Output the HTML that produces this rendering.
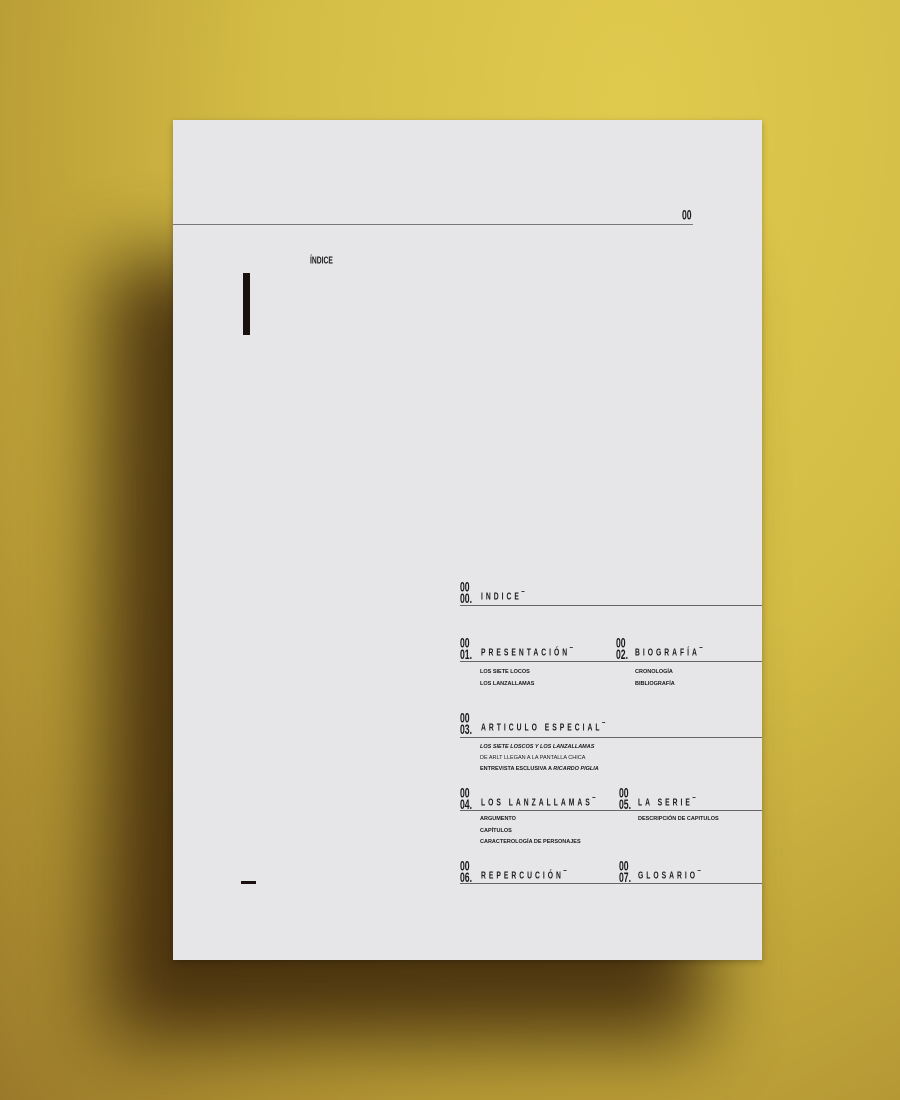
<!DOCTYPE html>
<html><head><meta charset="utf-8"><style>
html,body{margin:0;padding:0}
body{width:900px;height:1100px;position:relative;overflow:hidden;
background:radial-gradient(ellipse at 70% 10%,#e0ca4e 0%,#d4bd45 40%,#b79a35 75%,#9a7a2a 100%);
font-family:"Liberation Sans Narrow","Liberation Sans",sans-serif}
.shadow{position:absolute;left:105px;top:260px;width:600px;height:780px;background:#2e1804;filter:blur(40px);opacity:.8}
.paper{position:absolute;left:173px;top:120px;width:589px;height:840px;background:#e6e6e8;box-shadow:0 2px 6px rgba(0,0,0,.25)}
.a{position:absolute;color:#1a1a1a}
.ln{position:absolute;height:1px;background:#666}
.n{position:absolute;font-weight:bold;font-size:12px;line-height:10px;transform:scale(.72,1.15);transform-origin:left top}
.t{position:absolute;font-weight:bold;font-size:9px;letter-spacing:4px;transform:scale(.75,1.1);transform-origin:left}
.s{position:absolute;font-weight:bold;font-size:5.5px;font-family:"Liberation Sans",sans-serif}
</style></head><body>
<div class="shadow"></div>
<div class="paper">
<div class="ln" style="left:0;top:104px;width:520px;background:#777"></div>
<div class="n a" style="left:509px;top:89px">00</div>
<div class="a" style="left:137px;top:135px;font-size:9px;font-weight:bold;transform:scale(.75,1.1);transform-origin:left">ÍNDICE</div>
<div class="a" style="left:70px;top:153px;width:7px;height:62px;background:#1a1010"></div>
<div class="a" style="left:68px;top:761px;width:15px;height:3px;background:#1a1010"></div>

<div class="n a" style="left:287px;top:461px">00<br>00.</div>
<div class="t a" style="left:308px;top:471px">INDICE‾</div>
<div class="ln" style="left:287px;top:485px;width:302px"></div>

<div class="n a" style="left:287px;top:517px">00<br>01.</div>
<div class="t a" style="left:308px;top:527px">PRESENTACIÓN‾</div>
<div class="n a" style="left:443px;top:517px">00<br>02.</div>
<div class="t a" style="left:462px;top:527px">BIOGRAFÍA‾</div>
<div class="ln" style="left:287px;top:541px;width:302px"></div>
<div class="s a" style="left:307px;top:549px">LOS SIETE LOCOS</div>
<div class="s a" style="left:307px;top:561px">LOS LANZALLAMAS</div>
<div class="s a" style="left:462px;top:549px">CRONOLOGÍA</div>
<div class="s a" style="left:462px;top:561px">BIBLIOGRAFÍA</div>

<div class="n a" style="left:287px;top:592px">00<br>03.</div>
<div class="t a" style="left:308px;top:602px">ARTICULO ESPECIAL‾</div>
<div class="ln" style="left:287px;top:617px;width:302px"></div>
<div class="s a" style="left:307px;top:624px;font-style:italic">LOS SIETE LOSCOS Y LOS LANZALLAMAS</div>
<div class="s a" style="left:307px;top:635px;font-weight:normal">DE ARLT LLEGAN A LA PANTALLA CHICA</div>
<div class="s a" style="left:307px;top:646px">ENTREVISTA ESCLUSIVA A <i>RICARDO PIGLIA</i></div>

<div class="n a" style="left:287px;top:667px">00<br>04.</div>
<div class="t a" style="left:308px;top:677px">LOS LANZALLAMAS‾</div>
<div class="n a" style="left:446px;top:667px">00<br>05.</div>
<div class="t a" style="left:465px;top:677px">LA SERIE‾</div>
<div class="ln" style="left:287px;top:690px;width:302px"></div>
<div class="s a" style="left:307px;top:696px">ARGUMENTO</div>
<div class="s a" style="left:307px;top:708px">CAPÍTULOS</div>
<div class="s a" style="left:307px;top:719px">CARACTEROLOGÍA DE PERSONAJES</div>
<div class="s a" style="left:465px;top:696px">DESCRIPCIÓN DE CAPITULOS</div>

<div class="n a" style="left:287px;top:740px">00<br>06.</div>
<div class="t a" style="left:308px;top:750px">REPERCUCIÓN‾</div>
<div class="n a" style="left:446px;top:740px">00<br>07.</div>
<div class="t a" style="left:465px;top:750px">GLOSARIO‾</div>
<div class="ln" style="left:287px;top:763px;width:302px"></div>
</div>
</body></html>
